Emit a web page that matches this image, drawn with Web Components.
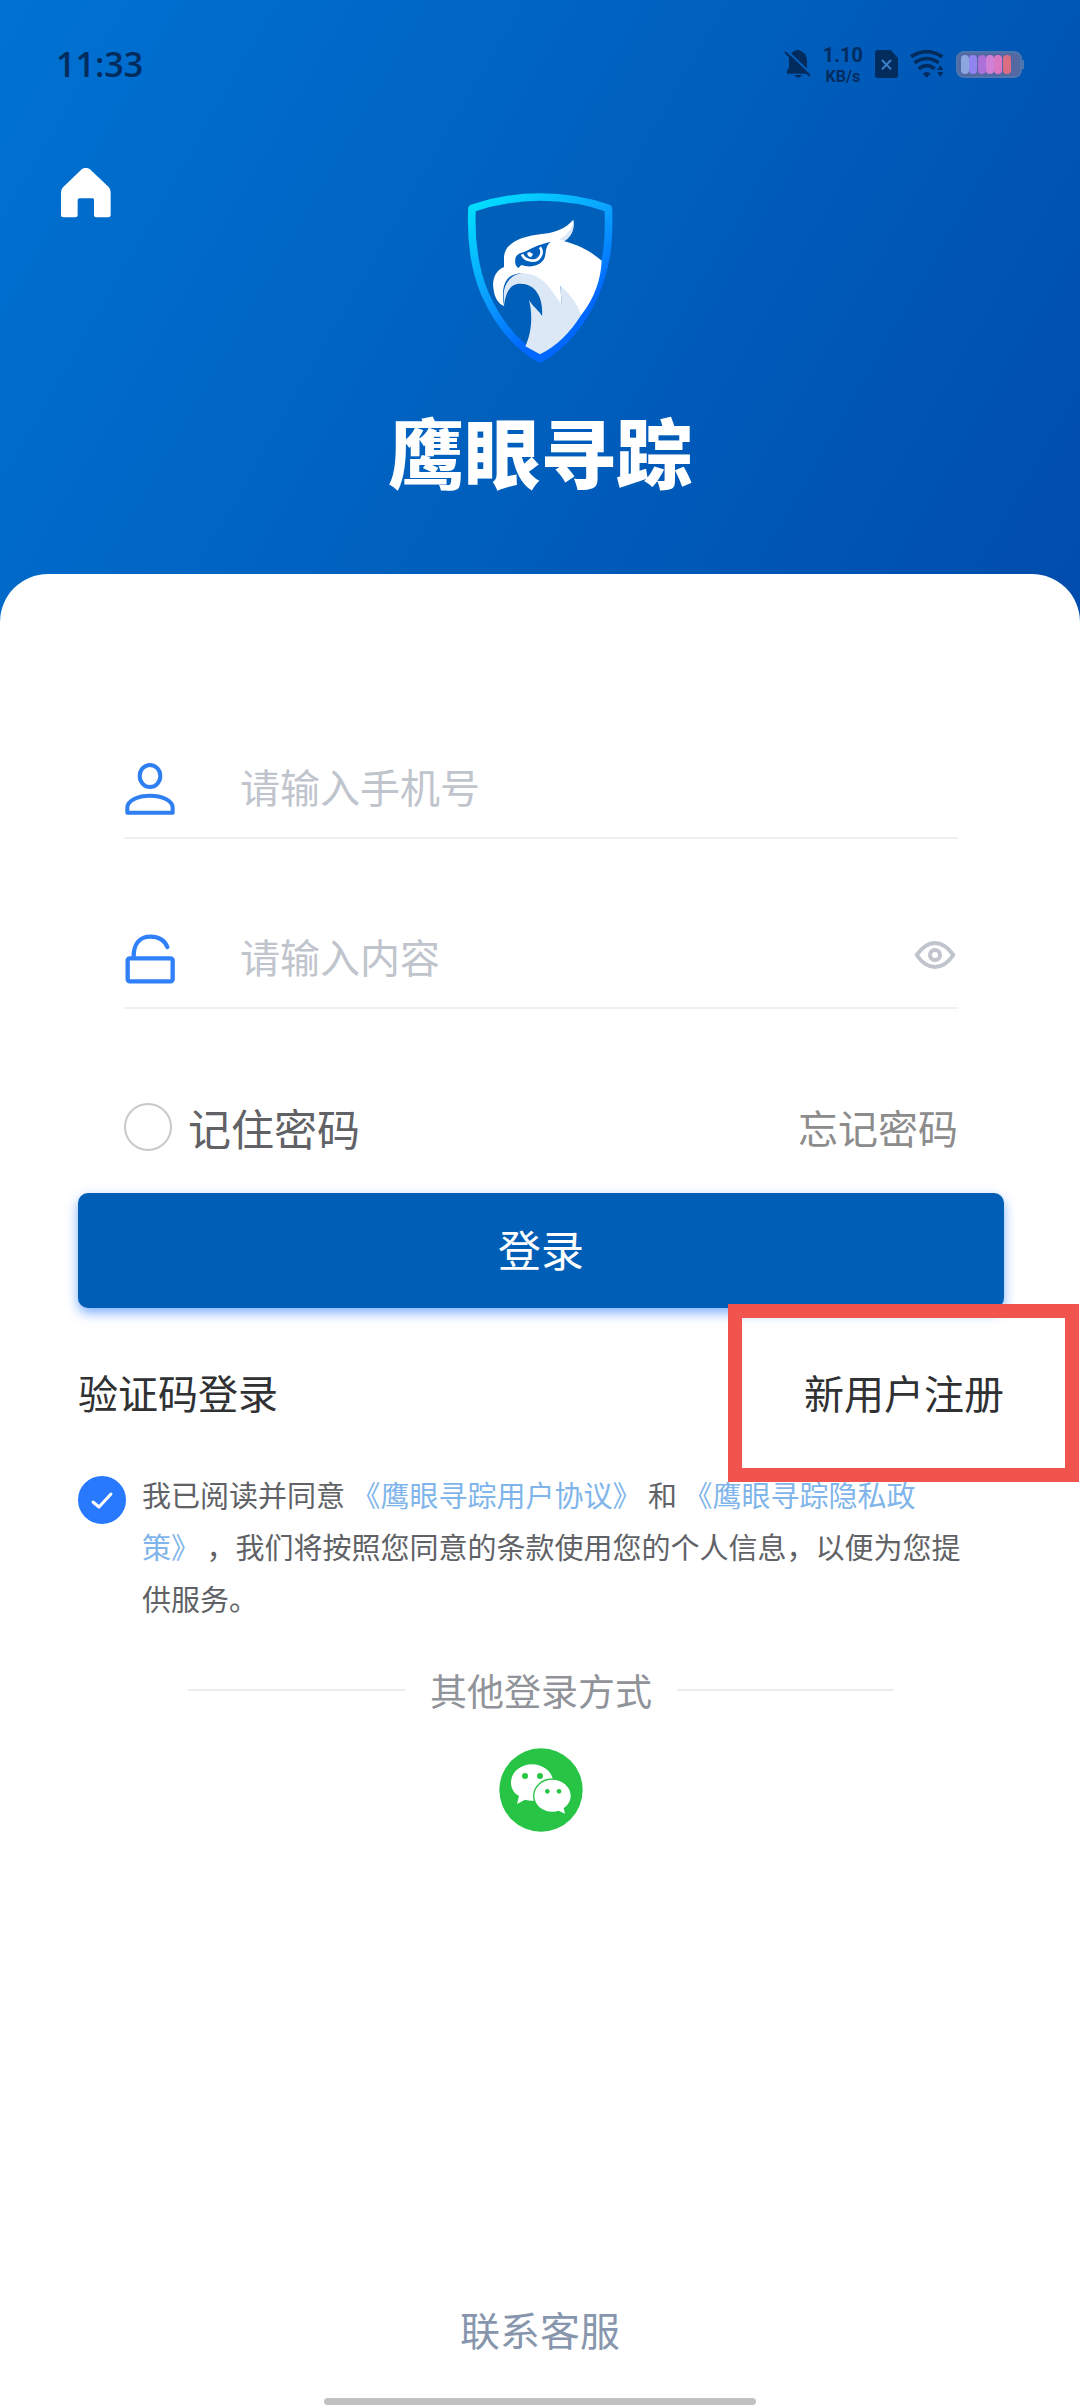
<!DOCTYPE html>
<html lang="zh-CN">
<head>
<meta charset="utf-8">
<meta name="viewport" content="width=device-width, initial-scale=1">
<title>鹰眼寻踪</title>
<style>
body {
    margin: 0;
    background: white;
    font-family: "Noto Sans CJK SC", sans-serif;
}
</style>
</head>
<body>
<login-page></login-page>

<script>
class BaseElement extends HTMLElement {
    constructor() {
        super()
        const shadowRoot = this.attachShadow({ mode: 'open' })
        const template = document.createElement('template');
        template.innerHTML = `${this.style_}${this.html}`;
        shadowRoot.appendChild(template.content.cloneNode(true));
    }
    get html() { return `<slot></slot>` }
    get style_() { return `` }
}

class StatusBar extends BaseElement {
    get html() { return `
<span class="time">11:33</span>
<div class="icons">
    <svg width="27" height="30" viewBox="75 56 81 90" fill="#032c5e">
        <path d="M90 84Q96 64 112 60Q116 56 120 60Q142 66 144 90V116L152 130H84V120L90 112Z M105 134H130Q118 150 105 134Z"/>
        <path d="M82 60L156 130" stroke="#0060bd" stroke-width="6"/>
        <path d="M78 65L152 136" stroke="#032c5e" stroke-width="6"/>
    </svg>
    <div class="speed"><span class="num">1.10</span><span class="unit">KB/s</span></div>
    <svg width="23" height="28" viewBox="354 60 69 84">
        <path d="M362 60H401L423 84V136Q423 144 415 144H362Q354 144 354 136V68Q354 60 362 60Z" fill="#032c5e"/>
        <path d="M375 90L402 118M402 90L375 118" stroke="#3c80c8" stroke-width="6"/>
    </svg>
    <svg width="34" height="28" viewBox="456 62 102 84" fill="none" stroke="#032c5e" stroke-width="11">
        <path d="M459 82Q506 52 553 82"/>
        <path d="M470 100Q506 75 542 100"/>
        <path d="M482 118Q506 100 530 118"/>
        <path d="M494 133Q506 123 518 133L506 145Z" fill="#032c5e" stroke="none"/>
        <path d="M547 108L556 122H538ZM538 128H556L547 143Z" fill="#032c5e" stroke="none"/>
    </svg>
    <svg class="battery" width="68" height="27" viewBox="0 0 68 27">
        <rect x="1" y="1" width="64" height="25" rx="7" fill="#5469a4" stroke="#4e76ae" stroke-width="2"/>
        <path d="M67 9V18" stroke="#4e76ae" stroke-width="2"/>
        <rect x="5" y="4" width="8" height="19" rx="4" fill="#8ca6df"/>
        <rect x="13" y="4" width="8" height="19" rx="4" fill="#9084f0"/>
        <rect x="22" y="4" width="8" height="19" rx="4" fill="#ab70d9"/>
        <rect x="30" y="4" width="8" height="19" rx="4" fill="#d181d5"/>
        <rect x="38" y="4" width="8" height="19" rx="4" fill="#dc78c2"/>
        <rect x="47" y="4" width="8" height="19" rx="4" fill="#db6d82"/>
    </svg>
</div>
    `}
    get style_() { return `
<style>
:host {
    display: flex;
    height: 128px;
    padding: 0 56px;
    align-items: center;
    justify-content: space-between;
    color: #032c5e;
}
.time {
    font-family: "Open Sans", sans-serif;
    font-weight: 600;
    font-size: 34px;
}
.icons {
    display: flex;
    align-items: center;
    gap: 12px;
}
.speed {
    display: flex;
    flex-direction: column;
    align-items: center;
    font-family: Roboto, sans-serif;
    font-weight: 700;
}
.num {
    font-size: 20px;
    line-height: 24px;
}
.unit {
    font-size: 16px;
    line-height: 19px;
}
</style>
    `}
}
window.customElements.define('status-bar', StatusBar)

class BrandLogo extends BaseElement {
    get html() { return `
<svg width="146" height="172" viewBox="86 64 438 516">
    <defs>
        <linearGradient id="edge" x1="0" y1="0" x2="0.6" y2="1">
            <stop offset="0" stop-color="#00e4ff"/>
            <stop offset="0.5" stop-color="#0ba0ff"/>
            <stop offset="0.85" stop-color="#0068ff"/>
        </linearGradient>
    </defs>
    <path d="M101 113C170 90 240 79 305 79C370 79 445 90 510 113C514 210 506 285 470 370C430 460 375 525 305 565C235 525 180 460 140 370C104 285 97 200 101 113Z" fill="#005fb9" stroke="url(#edge)" stroke-width="23" stroke-linejoin="round"/>
    <!-- neck -->
    <path d="M196 378C194 325 235 300 280 308C325 318 350 365 370 402L366 340L430 400L428 434C396 485 355 527 305 551L261 527C278 490 285 440 272 387C283 408 302 418 311 436C315 390 298 350 262 341C225 333 204 350 197 405Z" fill="#dce8f6"/>
    <!-- head and beak -->
    <path d="M405 147C380 176 346 186 310 190C255 196 197 214 197 262V289C173 298 161 325 165 352C169 384 180 399 197 406C191 374 192 343 208 324C228 303 270 304 297 319C333 340 350 376 370 402L366 345C395 369 417 397 428 434C468 384 488 326 490 270C460 245 423 223 378 212C400 197 409 175 405 147Z" fill="#fff"/>
    <path d="M405 150C402 174 386 192 364 206L378 211C400 197 409 175 405 150Z" fill="#dce8f6"/>
    <!-- eye -->
    <path d="M337 213C312 219 286 228 262 242C252 247 234 248 231 264C229 278 232 286 240 292L249 283C273 292 308 287 318 263C325 246 318 230 337 213Z" fill="#0060bb"/>
    <path d="M251 251C261 272 293 277 305 258C312 248 310 237 305 230" fill="none" stroke="#fff" stroke-width="8"/>
    <path d="M267 246Q266 257 276 260Q284 257 283 248Q277 249 275 243Z" fill="#fff"/>
</svg>
<h1><slot></slot></h1>
    `}
    get style_() { return `
<style>
:host {
    display: flex;
    flex-direction: column;
    align-items: center;
    gap: 48px;
    padding-top: 24px;
}
h1 {
    margin: 0;
    font-size: 76px;
    line-height: 76px;
    font-weight: 900;
    color: white;
}
</style>
    `}
}
window.customElements.define('brand-logo', BrandLogo)

class PageHeader extends BaseElement {
    get html() { return `
<status-bar></status-bar>
<div class="main">
    <a href="#home" aria-label="首页">
        <svg width="50" height="50" viewBox="184 446 150 150" fill="#fff">
            <path d="M247 449Q258 442 270 449L327 503Q333 510 333 518V588Q333 594 326 594H289Q283 594 283 588V541Q283 537 278 537H240Q234 537 234 542V588Q234 594 227 594H191Q184 594 184 588V518Q184 510 190 504Z"/>
        </svg>
    </a>
    <brand-logo><slot></slot></brand-logo>
</div>
    `}
    get style_() { return `
<style>
:host {
    display: block;
    padding-bottom: 134px;
    background: linear-gradient(120deg, #0072d3 0%, #0060be 50%, #004cac 100%);
}
.main {
    display: grid;
    grid-template-columns: 1fr auto 1fr;
    align-items: start;
    padding: 40px 61px 0;
}
a, svg {
    display: block;
}
a {
    justify-self: start;
}
</style>
    `}
}
window.customElements.define('page-header', PageHeader)

const fieldIcons = {
    user: `<svg width="50" height="52" viewBox="76 96 150 156" fill="none" stroke="#2f7ff0" stroke-width="12" stroke-linejoin="round">
        <ellipse cx="151" cy="135" rx="31" ry="33"/>
        <path d="M83 245V230C83 208 115 194 151 194C187 194 219 208 219 230V245Z"/>
    </svg>`,
    lock: `<svg width="50" height="50" viewBox="76 613 150 150" fill="none" stroke="#3080fa" stroke-width="13" stroke-linecap="round">
        <rect x="84" y="686" width="135" height="69" rx="6"/>
        <path d="M102 680C102 641 122 621 152 621C179 621 196 635 203 652"/>
    </svg>`
}

class FormField extends BaseElement {
    connectedCallback() {
        var input = this.shadowRoot.querySelector('input')
        input.placeholder = this.getAttribute('placeholder')
        input.type = this.getAttribute('type')
        input.setAttribute('aria-label', this.getAttribute('label'))
        this.shadowRoot.querySelector('.icon').innerHTML = fieldIcons[this.getAttribute('icon')]
    }
    get html() { return `
<span class="icon"></span>
<input>
<slot name="action"></slot>
    `}
    get style_() { return `
<style>
:host {
    display: flex;
    align-items: center;
    height: 102px;
    border-bottom: 2px solid #f0f0f0;
}
.icon, .icon svg {
    display: block;
}
.icon {
    margin: 0 65px 0 1px;
    padding-top: 6px;
}
input {
    flex: 1;
    min-width: 0;
    padding: 0;
    border: 0;
    outline: none;
    background: none;
    font: inherit;
    font-size: 40px;
    color: #303133;
}
input::placeholder {
    color: #c0c4cc;
    opacity: 1;
}
</style>
    `}
}
window.customElements.define('form-field', FormField)

class EyeButton extends BaseElement {
    get html() { return `
<button type="button" aria-label="显示密码">
    <svg width="42" height="30" viewBox="645 119 126 90" fill="none" stroke="#c0c4cc" stroke-width="12" stroke-linejoin="round">
        <path d="M653 164C670 140 688 128 708 128C728 128 746 140 763 164C746 189 728 200 708 200C688 200 670 189 653 164Z"/>
        <circle cx="708" cy="164" r="15"/>
    </svg>
</button>
    `}
    get style_() { return `
<style>
:host, svg {
    display: block;
}
button {
    display: block;
    padding: 0 2px 2px 0;
    border: 0;
    background: none;
}
</style>
    `}
}
window.customElements.define('eye-button', EyeButton)

class RoundCheck extends BaseElement {
    connectedCallback() {
        this.shadowRoot.querySelector('input').checked = this.hasAttribute('checked')
    }
    get html() { return `
<label>
    <span class="box">
        <input type="checkbox">
        <svg width="48" height="48" viewBox="0 0 48 48" fill="none" stroke="#fff" stroke-width="3" stroke-linecap="round" stroke-linejoin="round">
            <path d="M15 26L21 31L33 18"/>
        </svg>
    </span>
    <span class="text"><slot></slot></span>
</label>
    `}
    get style_() { return `
<style>
:host {
    display: block;
}
label {
    display: flex;
    align-items: var(--check-align, center);
    gap: 16px;
}
.box {
    display: grid;
    flex: none;
    margin-top: var(--check-top, 0);
}
input, svg {
    grid-area: 1 / 1;
}
input {
    appearance: none;
    box-sizing: border-box;
    width: 48px;
    height: 48px;
    margin: 0;
    border: 2px solid #c8c9cc;
    border-radius: 50%;
}
input:checked {
    border-color: #2979ff;
    background: #2979ff;
}
svg {
    visibility: hidden;
    pointer-events: none;
}
input:checked + svg {
    visibility: visible;
}
</style>
    `}
}
window.customElements.define('round-check', RoundCheck)

class TextLink extends BaseElement {
    connectedCallback() {
        this.shadowRoot.querySelector('a').href = this.getAttribute('href')
    }
    get html() { return `<a><slot></slot></a>` }
    get style_() { return `
<style>
:host {
    display: inline;
}
:host([marked]) {
    display: block;
    position: relative;
}
/* highlight frame round the link */
:host([marked])::after {
    content: "";
    position: absolute;
    inset: -60px -75px -62px -76px;
    border: 14px solid #f0544d;
    pointer-events: none;
}
a {
    color: inherit;
    text-decoration: none;
}
</style>
    `}
}
window.customElements.define('text-link', TextLink)

class SubmitButton extends BaseElement {
    get html() { return `<button type="button"><slot></slot></button>` }
    get style_() { return `
<style>
:host {
    display: block;
}
button {
    display: block;
    width: 100%;
    height: 115px;
    padding: 0 0 6px;
    border: 0;
    border-radius: 10px;
    background: #005eb7;
    box-shadow: 0 5px 12px rgba(41, 121, 255, 0.6);
    font: inherit;
    font-size: 43px;
    color: white;
}
</style>
    `}
}
window.customElements.define('submit-button', SubmitButton)

class OtherLogin extends BaseElement {
    get html() { return `
<div class="divider"><slot></slot></div>
<button type="button" aria-label="微信登录">
    <svg width="84" height="84" viewBox="59 263 252 252" fill="#fff">
        <circle cx="185" cy="389" r="125" fill="#28c445"/>
        <path d="M158 312C193 312 222 337 222 367C222 398 193 421 158 421Q148 421 137 418L113 431L119 407C103 397 95 384 95 367C95 337 123 312 158 312Z"/>
        <path d="M219 358C249 358 274 380 274 406C274 422 266 434 253 443L257 460L238 451Q229 454 219 454C189 454 165 433 165 406C165 380 189 358 219 358Z" stroke="#28c445" stroke-width="8" paint-order="stroke"/>
        <g fill="#28c445">
            <circle cx="137" cy="347" r="9"/><circle cx="182" cy="347" r="9"/>
            <circle cx="204" cy="393" r="7"/><circle cx="239" cy="393" r="7"/>
        </g>
    </svg>
</button>
    `}
    get style_() { return `
<style>
:host {
    display: flex;
    flex-direction: column;
    align-items: center;
    gap: 32px;
}
.divider {
    display: flex;
    align-self: stretch;
    align-items: center;
    gap: 25px;
    padding: 0 110px;
    font-size: 37px;
    line-height: 52px;
    color: #909399;
}
.divider::before, .divider::after {
    content: "";
    flex: 1;
    height: 2px;
    background: #ececec;
}
button, svg {
    display: block;
}
button {
    padding: 0;
    border: 0;
    background: none;
}
</style>
    `}
}
window.customElements.define('other-login', OtherLogin)

class LoginForm extends BaseElement {
    get html() { return `
<div class="fields">
    <form-field icon="user" type="tel" label="手机号" placeholder="请输入手机号"></form-field>
    <form-field icon="lock" type="password" label="密码" placeholder="请输入内容"><eye-button slot="action"></eye-button></form-field>
</div>
<div class="options">
    <round-check>记住密码</round-check>
    <text-link class="forgot" href="#forgot">忘记密码</text-link>
</div>
<submit-button>登录</submit-button>
<nav>
    <text-link href="#code">验证码登录</text-link>
    <text-link href="#register" marked>新用户注册</text-link>
</nav>
<round-check class="agreement" checked>我已阅读并同意 <text-link href="#terms">《鹰眼寻踪用户协议》</text-link> 和 <text-link href="#privacy">《鹰眼寻踪隐私政策》</text-link> ，我们将按照您同意的条款使用您的个人信息，以便为您提供服务。</round-check>
<other-login>其他登录方式</other-login>
    `}
    get style_() { return `
<style>
:host {
    display: block;
    padding: 161px 76px 0 78px;
}
.fields {
    display: grid;
    gap: 66px;
    padding: 0 46px;
}
.options {
    display: flex;
    align-items: center;
    justify-content: space-between;
    height: 60px;
    margin: 88px 0 36px;
    padding: 0 46px;
    font-size: 43px;
    color: #606266;
}
.forgot {
    font-size: 40px;
    color: #8c8c8c;
}
nav {
    display: flex;
    justify-content: space-between;
    margin: 56px 0 48px;
    font-size: 40px;
    line-height: 56px;
    color: #303133;
}
.agreement {
    --check-align: flex-start;
    --check-top: 8px;
    margin-bottom: 40px;
    padding-right: 38px;
    font-size: 29px;
    line-height: 52px;
    text-spacing-trim: space-all;
    color: #606266;
}
.agreement text-link {
    color: #7fb5ea;
}
</style>
    `}
}
window.customElements.define('login-form', LoginForm)

class LoginPage extends BaseElement {
    get html() { return `
<page-header>鹰眼寻踪</page-header>
<main>
    <login-form></login-form>
    <footer>
        <text-link href="#service">联系客服</text-link>
        <div class="bar"></div>
    </footer>
</main>
    `}
    get style_() { return `
<style>
:host {
    display: flex;
    flex-direction: column;
    min-height: 100vh;
}
main {
    display: flex;
    flex: 1;
    flex-direction: column;
    justify-content: space-between;
    margin-top: -48px;
    border-radius: 48px 48px 0 0;
    background: white;
}
footer {
    display: flex;
    flex-direction: column;
    align-items: center;
    gap: 41px;
    padding: 40px 0 3px;
    font-size: 40px;
    line-height: 56px;
    color: #8796ad;
}
.bar {
    width: 40%;
    height: 7px;
    border-radius: 4px;
    background: #c1c1c1;
}
</style>
    `}
}
window.customElements.define('login-page', LoginPage)
</script>
</body>
</html>
